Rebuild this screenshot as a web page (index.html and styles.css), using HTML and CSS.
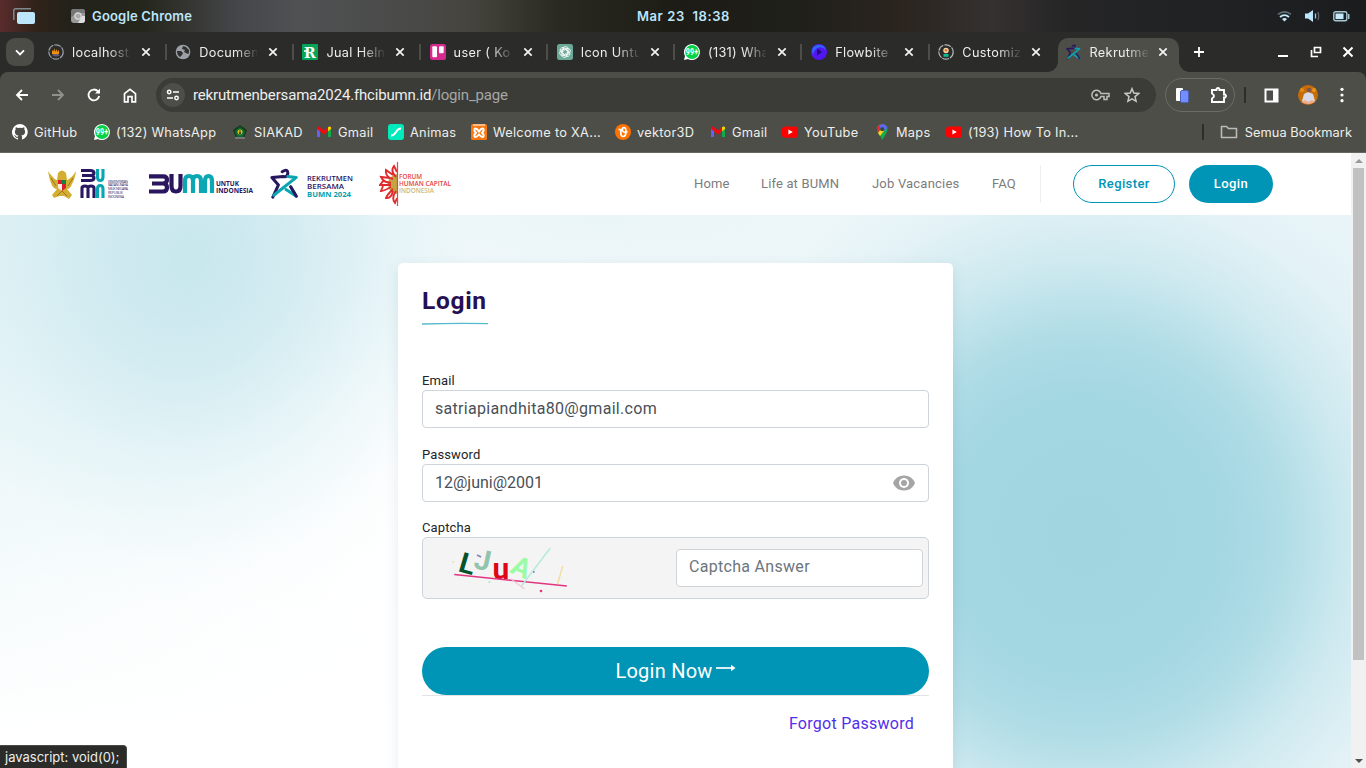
FILE: index.html
```html
<!DOCTYPE html>
<html lang="id">
<head>
<meta charset="utf-8">
<title>Rekrutmen Bersama</title>
<link rel="stylesheet" href="styles.css">
</head>
<body>
<svg width="0" height="0" class="defs">
  <symbol id="x" viewBox="0 0 10 10"><path d="M1.3 1.3l7.4 7.4M8.7 1.3L1.3 8.7" stroke="#f4f4f2" stroke-width="1.7" fill="none"/></symbol>
  <symbol id="gmail" viewBox="0 0 16 16"><path d="M1 4v9h3V6z" fill="#6561f5"/><path d="M12 6v7h3V4z" fill="#12ab4b"/><path d="M1 3.2Q2 1.7 4 3.3L8 6.5l4-3.2v4L8 10.5 4 7.3 1 5z" fill="#f00b12"/><path d="M12 3.3q2-1.7 3 0V5l-3 2.3z" fill="#ffd000"/></symbol>
  <symbol id="yt" viewBox="0 0 16 16"><rect y="2.5" width="16" height="11.2" rx="3" fill="#f00"/><path d="M6.4 5.6v5l4.4-2.5z" fill="#fff"/></symbol>
  <symbol id="star" viewBox="0 0 33 31"><path d="M13 3q6-4 6 2-1 4-5 3L2 9l7 8-6 13" fill="none" stroke="#28165f" stroke-width="3.2" stroke-linecap="round" stroke-linejoin="round"/><path d="M4 28l24-19-9-1M22 19l6 10-11-7" fill="none" stroke="#0aa5b0" stroke-width="3.2" stroke-linecap="round" stroke-linejoin="round"/><path d="M22 19l6 10" stroke="#28165f" stroke-width="3.2" stroke-linecap="round"/></symbol>
</svg>
<header class="system">
  <svg class="spaces" width="22" height="17" viewBox="0 0 22 17"><path d="M.8 12V2.6Q.8.8 2.5.8H18" fill="none" stroke="#7e898d" stroke-width="1.5"/><rect x="4" y="4" width="18" height="12" rx="2" fill="#bde6fb"/></svg>
  <svg class="appicon" width="14" height="14" viewBox="0 0 14 14"><rect width="14" height="14" rx="3" fill="#999"/><path d="M0 8V3q0-3 3-3h8q3 0 3 3v1H7z" fill="#777"/><path d="M7 14l4-7h3v4q0 3-3 3z" fill="#ddd"/><circle cx="7" cy="7" r="3.2" fill="#aaa" stroke="#ddd" stroke-width="1.2"/></svg>
  <b class="appname">Google Chrome</b>
  <b class="clock">Mar 23&nbsp; 18:38</b>
  <div class="tray">
    <svg width="15" height="12" viewBox="0 0 15 12"><path d="M1 4.3Q7.500-.7 14 4.300" fill="none" stroke="#627077" stroke-width="1.700"/><path d="M3 7Q7.500 3.300 12 7" fill="none" stroke="#c5eafa" stroke-width="1.800"/><path d="M5 9q2.500-1.800 5 0L7.500 11.500z" fill="#c5eafa"/></svg>
    <svg width="15" height="12" viewBox="0 0 15 12"><path d="M0 3.500h3L8 0v12L3 8.500H0z" fill="#bde6fb"/><path d="M10.500 3.500v5" stroke="#a8cad8" stroke-width="1.300"/><path d="M13 2q1.300 4 0 8" stroke="#566369" fill="none" stroke-width="1.400"/></svg>
    <svg width="17" height="11" viewBox="0 0 17 11"><rect x=".8" y=".8" width="13" height="9" rx="1.800" fill="none" stroke="#a5c7d6" stroke-width="1.400"/><rect x="2.500" y="2.500" width="8" height="5.600" fill="#c5eafa"/><path d="M15.700 3v5" stroke="#a5c7d6" stroke-width="1.500"/></svg>
  </div>
</header>

<div class="tabs">
  <div class="tabsearch"><svg width="10" height="7" viewBox="0 0 10 7"><path d="M1 1.300l4 4 4-4" fill="none" stroke="#fff" stroke-width="1.900"/></svg></div>
  <div class="tab"><svg class="ic" viewBox="0 0 16 16"><circle cx="8" cy="8" r="7.200" fill="none" stroke="#9aa0a6" stroke-width="1.200" stroke-dasharray="7 1"/><path d="M4 10V7l1.500-1v2l1.500-4v4l2-3v3l2-2v4l-3 1z" fill="#ef9210"/><path d="M4 11q4-2 8 0-4 3-8 0" fill="#665b7d"/></svg><span>localhost</span><svg class="cl"><use href="#x"/></svg></div>
  <div class="tab"><svg class="ic" viewBox="0 0 16 16"><circle cx="8" cy="8" r="7.300" fill="#9aa0a6"/><path d="M2 7h4l2 2-1 2-2 2Q2 11 2 7zM8 2l-1 3 3 1-1 2 4 2-2 2 3-3V6l-3-3z" fill="#30302e"/></svg><span>Documen</span><svg class="cl"><use href="#x"/></svg></div>
  <div class="tab"><svg class="ic" viewBox="0 0 16 16"><rect width="16" height="16" rx="1" fill="#04a557"/><text x="8" y="13.500" text-anchor="middle" font-family="DejaVu Serif" font-size="14" font-weight="700" fill="#fff">R</text><path d="M2 7h4" stroke="#fff" stroke-width="1.500"/></svg><span>Jual Heln</span><svg class="cl"><use href="#x"/></svg></div>
  <div class="tab"><svg class="ic" viewBox="0 0 16 16"><rect width="16" height="16" rx="2.500" fill="#d62a8c"/><rect x="2.300" y="2.300" width="4.700" height="11" rx="1" fill="#fff"/><rect x="9" y="2.300" width="4.700" height="7" rx="1" fill="#fff"/></svg><span>user ( Ko</span><svg class="cl"><use href="#x"/></svg></div>
  <div class="tab"><svg class="ic" viewBox="0 0 16 16"><rect width="16" height="16" rx="2.500" fill="#6aaa97"/><g fill="none" stroke="#fff" stroke-width=".8"><path id="petal" d="M6 8V5q0-2.500 2.500-2.500 2 0 2.500 2M6 6l3-1.700 3 1.700"/><use href="#petal" transform="rotate(60 8 8)"/><use href="#petal" transform="rotate(120 8 8)"/><use href="#petal" transform="rotate(180 8 8)"/><use href="#petal" transform="rotate(240 8 8)"/><use href="#petal" transform="rotate(300 8 8)"/></g></svg><span>Icon Untu</span><svg class="cl"><use href="#x"/></svg></div>
  <div class="tab"><svg class="ic" viewBox="0 0 16 16"><path d="M0 16l1-4A8 8 0 1 1 4 15z" fill="#fff"/><circle cx="8" cy="8" r="6.9" fill="#04d44a"/><text x="8" y="11.300" font-family="Roboto" font-size="9" font-weight="700" text-anchor="middle" fill="#fff" textLength="12.500" lengthAdjust="spacingAndGlyphs">99+</text></svg><span>(131) Wha</span><svg class="cl"><use href="#x"/></svg></div>
  <div class="tab"><svg class="ic" viewBox="0 0 16 16"><circle cx="8" cy="8" r="8" fill="#5216f0"/><path d="M2 11Q-1 3 6 1q7-1 9 5-5-5-10-1-3 3-3 6" fill="#2d66f6"/><path d="M6 4.500v7L11 8z" fill="#240b76"/></svg><span>Flowbite</span><svg class="cl"><use href="#x"/></svg></div>
  <div class="tab last"><svg class="ic" viewBox="0 0 16 16"><circle cx="8" cy="8" r="7.200" fill="none" stroke="#b4b7ba" stroke-width="1.200" stroke-dasharray="7 1"/><circle cx="8" cy="6.500" r="2.700" fill="#f8d8ab"/><circle cx="8" cy="6.300" r="1.400" fill="#e57c25"/><rect x="5.500" y="10" width="5" height="2.800" fill="#0dbd91"/></svg><span>Customiz</span><svg class="cl"><use href="#x"/></svg></div>
  <div class="tab active"><svg class="ic"><use href="#star"/></svg><span>Rekrutme</span><svg class="cl"><use href="#x"/></svg></div>
  <svg class="plus" width="12" height="12" viewBox="0 0 12 12"><path d="M6 1v10M1 6h10" stroke="#fff" stroke-width="1.800"/></svg>
  <div class="winbtns">
    <svg width="12" height="12" viewBox="0 0 12 12"><path d="M1 10h10" stroke="#fff" stroke-width="2"/></svg>
    <svg width="12" height="12" viewBox="0 0 12 12"><path d="M4.500 1.500h6v5h-6zM1.500 4v6.500H8" fill="none" stroke="#fff" stroke-width="1.700"/></svg>
    <svg width="12" height="12" viewBox="0 0 12 12"><path d="M1.500 1.500l9 9M10.500 1.500l-9 9" stroke="#fff" stroke-width="2"/></svg>
  </div>
</div>

<div class="chrome">
  <div class="toolbar">
    <svg width="14" height="12" viewBox="0 0 14 12"><path d="M13 6H2M7 1L2 6l5 5" fill="none" stroke="#fff" stroke-width="1.800"/></svg>
    <svg width="14" height="12" viewBox="0 0 14 12"><path d="M1 6h11M7 1l5 5-5 5" fill="none" stroke="#92928d" stroke-width="1.800"/></svg>
    <svg width="14" height="14" viewBox="0 0 14 14"><path d="M12.200 8A5.400 5.400 0 1 1 11 3.400L12.500 5" fill="none" stroke="#fff" stroke-width="1.800"/><path d="M13 .5v5H8z" fill="#fff"/></svg>
    <svg width="14" height="15" viewBox="0 0 14 15"><path d="M1.500 13.800V5.600L7 1.300l5.500 4.300v8.200H9V8.700H5v5.100z" fill="none" stroke="#fff" stroke-width="1.700"/></svg>
    <div class="omni">
      <i class="site"><svg width="14" height="12" viewBox="0 0 14 12"><g fill="none" stroke="#fff" stroke-width="1.500"><circle cx="3.200" cy="3" r="1.700"/><path d="M7 3h6M1 9h6"/><circle cx="10.500" cy="9" r="1.700"/></g></svg></i>
      <span class="url">rekrutmenbersama2024.fhcibumn.id<em>/login_page</em></span>
      <svg width="19" height="12" viewBox="0 0 19 12"><path d="M10 4.500A4.700 4.700 0 1 0 10 7.500h3v3h3v-3h2v-3z" fill="none" stroke="#bdbdb9" stroke-width="1.500"/><circle cx="5.500" cy="6" r="1.600" fill="#bdbdb9"/></svg>
      <svg width="16" height="16" viewBox="0 0 16 16"><path d="M8 1.700l1.800 4.400 4.900.4L11 9.600l1.100 4.700L8 11.800l-4.100 2.500L5 9.600 1.300 6.500l4.900-.4z" fill="none" stroke="#c7c7c3" stroke-width="1.500"/></svg>
    </div>
    <div class="ext">
      <svg width="14" height="16" viewBox="0 0 14 16"><rect x="1" y="1" width="7" height="13" rx="1" fill="#fff"/><rect x="5.500" y="3.500" width="8" height="12" rx="1.500" fill="#758eff" stroke="#4a61bd"/></svg>
      <svg width="18" height="18" viewBox="0 0 18 18"><path d="M2 4h4.500V3q1.500-2 3 0v1H14v4.500h1q2 1.500 0 3h-1V16H2v-3.500q4-2.500 0-5z" fill="none" stroke="#fff" stroke-width="1.900"/></svg>
    </div>
    <i class="vbar"></i>
    <svg class="side" width="15" height="15" viewBox="0 0 15 15"><rect x="1.500" y="1.500" width="12" height="12" fill="none" stroke="#fff" stroke-width="2"/><path d="M9 1h5v13H9z" fill="#fff"/></svg>
    <svg class="me" width="20" height="20" viewBox="0 0 20 20"><circle cx="10" cy="10" r="10" fill="#c66d08"/><circle cx="4" cy="5" r="2" fill="#e78b17"/><circle cx="16" cy="5" r="2" fill="#e9951a"/><path d="M4 16l2-7 4-2 5 2 2 7-6 3z" fill="#d6dae8"/><circle cx="11" cy="5" r="2.300" fill="#815447"/><path d="M3 17l4-2 3 2 4-2 3 2q-7 4-14 0" fill="#f3a986"/></svg>
    <svg width="4" height="16" viewBox="0 0 4 16"><g fill="#fff"><circle cx="2" cy="2.300" r="1.600"/><circle cx="2" cy="8" r="1.600"/><circle cx="2" cy="13.700" r="1.600"/></g></svg>
  </div>
  <div class="bookmarks">
    <a class="w1"><svg class="ic" viewBox="0 0 16 16"><path d="M8 0a8 8 0 0 0-2.500 15.600c.4.100.5-.2.500-.4v-1.400c-2.200.5-2.700-1-2.700-1-.4-.9-.9-1.200-.9-1.200-.7-.5.100-.5.100-.5.800.1 1.200.8 1.200.8.700 1.300 1.900.9 2.300.7.100-.5.300-.9.500-1.100-1.800-.2-3.600-.9-3.600-4 0-.9.300-1.600.8-2.100-.1-.2-.4-1 .1-2.100 0 0 .7-.2 2.200.8a7.500 7.500 0 0 1 4 0c1.500-1 2.200-.8 2.200-.8.400 1.100.2 1.900.1 2.100.5.600.8 1.300.8 2.100 0 3.100-1.900 3.700-3.700 3.900.3.300.6.800.6 1.500v2.200c0 .2.100.5.500.4A8 8 0 0 0 8 0" fill="#fff"/></svg>GitHub</a>
    <a class="w2"><svg class="ic" viewBox="0 0 16 16"><path d="M0 16l1-4A8 8 0 1 1 4 15z" fill="#fff"/><circle cx="8" cy="8" r="6.9" fill="#04d44a"/><text x="8" y="11.300" font-family="Roboto" font-size="9" font-weight="700" text-anchor="middle" fill="#fff" textLength="12.500" lengthAdjust="spacingAndGlyphs">99+</text></svg>(132) WhatsApp</a>
    <a class="w3"><svg class="ic" viewBox="0 0 16 16"><path d="M8 1l7 5-3 8H4L1 6z" fill="#173c1d"/><path d="M8 3l5 4-2 6H5L3 7z" fill="#0e6c32"/><circle cx="8" cy="8" r="2.500" fill="#e1bb16"/><path d="M8 5l1 5H7z" fill="#193a1f"/><path d="M3 13h10v2H3z" fill="#777"/></svg>SIAKAD</a>
    <a class="w4"><svg class="ic"><use href="#gmail"/></svg>Gmail</a>
    <a class="w5"><svg class="ic" viewBox="0 0 16 16"><rect width="16" height="16" rx="3" fill="#00eabc"/><path d="M3 11.500q3 0 5-3.500t5-3.500" fill="none" stroke="#fff" stroke-width="2"/></svg>Animas</a>
    <a class="w6"><svg class="ic" viewBox="0 0 16 16"><rect width="16" height="16" rx="1.500" fill="#f77810"/><path d="M2 1h12" stroke="#fff"/><path d="M8 7.500Q6 4.500 4.500 4.500T3.500 7L5 8.700l-1.500 1.800q-.5 2.500 1 2.500T8 10.500q2 2.500 3.500 2.500t1-2.500L11 8.700 12.500 7q.5-2.500-1-2.500T8 7.500z" fill="none" stroke="#fff" stroke-width="2"/></svg>Welcome to XA...</a>
    <a class="w7"><svg class="ic" viewBox="0 0 16 16"><circle cx="8" cy="8" r="8" fill="#ff7200"/><path d="M3.500 5.500H6q-1 7 2 7t3-5q0-4-2-4T7.500 6.500q1 3 5 1" fill="none" stroke="#fff" stroke-width="1.700"/></svg>vektor3D</a>
    <a class="w8"><svg class="ic"><use href="#gmail"/></svg>Gmail</a>
    <a class="w9"><svg class="ic"><use href="#yt"/></svg>YouTube</a>
    <a class="w10"><svg class="ic" viewBox="0 0 16 16"><path d="M3 5q0-4.500 5-5 5.500.5 5.500 5.500 0 3-5.500 10.500-1-4-4-7z" fill="#13ac4e"/><path d="M3 5q0-4 5-5L4 9q-1-2-1-4" fill="#e9252e"/><path d="M8 0q4 0 5.300 4L9 8 5 2z" fill="#5d66f5"/><path d="M4 9l4-5 2 3-4 5z" fill="#ffd117"/><circle cx="8.200" cy="5.300" r="2" fill="#41423b"/></svg>Maps</a>
    <a class="w11"><svg class="ic"><use href="#yt"/></svg>(193) How To In...</a>
    <i class="vbar bm"></i>
    <a class="all"><svg width="18" height="14" viewBox="0 0 18 14"><path d="M1.500 1.500h5l2 2h8v9h-15z" fill="none" stroke="#bbbbb7" stroke-width="1.600" stroke-linejoin="round"/></svg>Semua Bookmark</a>
  </div>
</div>

<div class="viewport">
  <div class="page">
    <nav class="nav">
      <svg class="l1" width="81" height="32" viewBox="0 0 81 32">
        <path d="M0 3q1 2 4 5 3 4 5 4l1-7q4-5 8 0l1 7q4-1 9-9-1 8-4 13-2 5-5 5l5 6-3 4-5-3H11l-5 2-2-3 5-6q-4 0-6-6Q1 10 0 3z" fill="#d3ae30"/><path d="M3 10l5 8M25 10l-5 8M9 28l5-5 5 5" stroke="#9b7722" fill="none"/><path d="M10 12h4v4h-4zm4 4h4v4l-4 3z" fill="#d81f32"/><path d="M14 12h4v4h-4z" fill="#19833b"/><path d="M10 16h4v7l-4-3z" fill="#f3efe0"/>
        <g fill="none" stroke-width="3.100"><path d="M33 2.500h9q4 0 4 2.500t-4 2.500h-8 8q4 0 4 2.500t-4 2.500h-9M34 30V20q0-2 3-2t3 2v10-10q0-2 3-2t3 2v10" stroke="#281761"/><path d="M49.500 1v8q0 3.500 2.700 3.500T55 9V1M49.500 30V21q0-3.500 2.700-3.500T55 21v9" stroke="#08a6b1"/></g>
        <g class="wide" font-size="3.600" fill="#39306b"><text x="60" y="14.500" textLength="20">KEMENTERIAN</text><text x="60" y="18.300" textLength="20">BADAN USAHA</text><text x="60" y="22.100" textLength="20">MILIK NEGARA</text><text x="60" y="25.900" textLength="15">REPUBLIK</text><text x="60" y="29.700" textLength="16">INDONESIA</text></g>
      </svg>
      <svg class="l2" width="106" height="22" viewBox="0 0 106 22">
        <g fill="none" stroke-width="4.200"><path d="M1 3.300h14q4 0 4 3.400T15 10.500H4h11q4 0 4 4T15 18.500H1M23.500 1v12q0 5.500 4.500 5.500t4.500-5.500V1" stroke="#29165f"/><path d="M37 20V8q0-5 4-5t4 5v12V8q0-5 4-5t4 5v12M57 20V8q0-5 3.500-5T64 8v12" stroke="#0ba8b3"/></g>
        <g class="wide" font-size="6.800" font-weight="700" fill="#29165f"><text x="68" y="12.500" textLength="23" lengthAdjust="spacingAndGlyphs">UNTUK</text><text x="68" y="19.500" textLength="37" lengthAdjust="spacingAndGlyphs">INDONESIA</text></g>
      </svg>
      <svg class="l3" width="84" height="33" viewBox="0 0 84 33"><svg width="31" height="31"><use href="#star"/></svg><g class="wide" font-size="7.300" font-weight="600" fill="#29165f"><text x="37" y="13.300" textLength="46" lengthAdjust="spacingAndGlyphs">REKRUTMEN</text><text x="37" y="20.900" textLength="37" lengthAdjust="spacingAndGlyphs">BERSAMA</text><text x="37" y="28.500" textLength="44" lengthAdjust="spacingAndGlyphs" font-weight="700" fill="#06a2af">BUMN 2024</text></g></svg>
      <svg class="l4" width="74" height="46" viewBox="0 0 74 46"><path d="M18 13q-9 2-9 10t9 10z" fill="#c4a343"/><g fill="none" stroke="#e02b2c" stroke-width="1.900"><path d="M17 16q-6-6-2-11l3 6M14 18Q6 16 7 9l7 5M12 22Q5 22 2 16l9 1M12 24Q5 24 1 24l3-4 8 2M12 26q-7 4-10 4l2-5M14 28q-6 6-7 9 5 1 7-7M17 30q-5 7-1 12l2-5"/></g><path d="M18.500 1v44" stroke="#df4a43" stroke-width="1.200"/><g class="wide" font-size="6.500" font-weight="600" fill="#e44344"><text x="20" y="18" textLength="23" lengthAdjust="spacingAndGlyphs">FORUM</text><text x="20" y="25" textLength="52" lengthAdjust="spacingAndGlyphs">HUMAN CAPITAL</text><text x="20" y="32.200" textLength="35" lengthAdjust="spacingAndGlyphs" fill="#cbb87a">INDONESIA</text></g></svg>
      <div class="links"><a class="n1">Home</a><a class="n2">Life at BUMN</a><a class="n3">Job Vacancies</a><a class="n4">FAQ</a></div>
      <a class="btn outline">Register</a><a class="btn solid">Login</a>
    </nav>
    <main class="hero">
      <form class="card">
        <h1>Login</h1>
        <svg class="stroke" width="66" height="3" viewBox="0 0 66 3"><path d="M0 2Q32 1 66 1.600" stroke="#55b8cd" stroke-width="1.400" fill="none"/></svg>
        <label class="em">Email</label>
        <div class="field email">satriapiandhita80@gmail.com</div>
        <label>Password</label>
        <div class="field pass"><span>12@juni@2001</span><svg width="22" height="16" viewBox="0 0 22 16"><path d="M0 8Q3 .5 11 .5T22 8q-3 7.500-11 7.500T0 8z" fill="#a5a5a5"/><circle cx="11" cy="8" r="5" fill="#fff"/><circle cx="11" cy="8" r="3" fill="#a5a5a5"/></svg></div>
        <label class="cap">Captcha</label>
        <div class="captcha">
          <svg width="126" height="50" viewBox="0 0 122 50" preserveAspectRatio="none"><g font-family="Roboto" font-weight="700"><text transform="translate(11 28) rotate(16)" font-size="28" fill="#06522c">L</text><text transform="translate(26 25) rotate(12)" font-size="28" fill="#92c3ad">J</text><text x="45" y="36" font-size="29" fill="#de0715">u</text><text transform="translate(61 29) rotate(24)" font-size="27" fill="#9bfca5">A</text></g><path d="M8 31.500l109 11.500" stroke="#df367f" stroke-width="1.600"/><path d="M73 43L101 5" stroke="#b6ebdc" stroke-width="1.400"/><path d="M108 41l5-18" stroke="#f1dfa0" stroke-width="1.400"/><path d="M63 36l13 10" stroke="#f1c4d4"/><path d="M30 12l4 2" stroke="#8980be" stroke-width="1.500"/><circle cx="7" cy="19" r="1" fill="#efe398"/><circle cx="92" cy="48" r="1.300" fill="#df367f"/><circle cx="42" cy="39" r="1" fill="#a2e9c5"/><circle cx="85" cy="29" r="1" fill="#8787bd"/></svg>
          <div class="field answer">Captcha Answer</div>
        </div>
        <button type="button" class="submit"><span>Login Now</span><svg width="20" height="10" viewBox="0 0 20 10"><path d="M0 5h17" stroke="#fff" stroke-width="1.700"/><path d="M15 1.800v6.400L19.500 5z" fill="#fff"/></svg></button>
        <hr>
        <a class="forgot">Forgot Password</a>
      </form>
    </main>
  </div>
  <aside class="scroll"><i class="up"></i><i class="thumb"></i><i class="down"></i></aside>
</div>
<div class="status">javascript: void(0);</div>
</body>
</html>
```
FILE: styles.css
```css
* { box-sizing: border-box; }
body { margin: 0; width: 1366px; height: 768px; overflow: hidden; display: flex; flex-direction: column; font-family: Inter, sans-serif; color: #eeeeec; background: #2b2c29; }
svg { flex: none; display: block; }
.defs { position: absolute; }
.ic { width: 16px; height: 16px; }
.system { height: 32px; flex: none; display: flex; align-items: center; padding: 0 16px 1px 0; color: #bde6fb; font-size: 13px; background: linear-gradient(90deg, #592c2c 0, #30231a 35px, #22221a 70px, #24251b 140px, #46474a 240px, #505153 300px, #4a4a49 400px, #45443e 470px, #2a2920 560px, #1c1b15 680px, #20201b 800px, #2b241f 900px, #353130 990px, #252526 1070px, #212224 1200px, #1b1c1e 1366px); }
.spaces { margin: 1px 0 0 13px; }
.appicon { margin: 1px 0 0 36px; }
.appname { margin-left: 7px; width: 100px; font-weight: 600; letter-spacing: .17px; white-space: nowrap; }
.clock { margin-left: 445px; font-weight: 600; letter-spacing: .58px; white-space: nowrap; }
.tray { margin: 1px 0 0 auto; display: flex; align-items: center; gap: 13px; }
.tabs { height: 40px; flex: none; display: flex; align-items: center; padding: 6px 12px 0 6px; background: #2b2c29; }
.tabsearch { width: 28px; height: 28px; margin: -6px 6px 0 0; border-radius: 9px; background: #4b4c46; display: grid; place-items: center; }
.tab { width: 127.200px; height: 34px; flex: none; padding: 0 0 6px 8px; display: flex; align-items: center; gap: 8px; font-size: 12.700px; letter-spacing: .35px; background: linear-gradient(#4d4d49, #4d4d49) 124.500px 6px / 2px 16px no-repeat; }
.tab span { width: 58px; white-space: nowrap; mask-image: linear-gradient(90deg, #000 36px, transparent 60px); }
.cl { width: 10px; height: 10px; margin-left: 3px; }
.tab.last { background: none; }
.tab.active { width: 121px; background: #4d4e48; border-radius: 10px 10px 0 0; position: relative; }
.tab.active .cl { margin-left: 2px; }
.tab.active::before, .tab.active::after { content: ""; position: absolute; bottom: 0; width: 10px; height: 10px; }
.tab.active::before { left: -10px; background: radial-gradient(circle at 0 0, transparent 9.500px, #4d4e48 10px); }
.tab.active::after { right: -10px; background: radial-gradient(circle at 100% 0, transparent 9.500px, #4d4e48 10px); }
.plus { margin: -6px 0 0 14px; }
.winbtns { display: flex; gap: 20.500px; margin: -6px 0 0 auto; }
.chrome { height: 81px; flex: none; background: #4d4e48; border-radius: 8px 8px 0 0; border-bottom: 1px solid #656660; }
.toolbar { height: 46px; display: flex; align-items: center; padding: 0 20px 0 15px; gap: 22px; }
.omni { width: 1000px; height: 34px; margin-left: -3px; border-radius: 17px; background: #3b3b38; display: flex; align-items: center; padding: 0 16px 0 5px; gap: 14px; }
.site { width: 24px; height: 24px; border-radius: 50%; background: #4d4e48; display: grid; place-items: center; }
.url { margin-left: -6px; font: 15px Roboto, sans-serif; flex: 1; letter-spacing: -.17px; }
.url em { font-style: normal; color: #a7a7a3; }
.ext { margin-left: -13px; width: 70px; height: 34px; border: 1px solid #6b6c66; border-radius: 17px; display: flex; align-items: center; justify-content: space-between; padding: 0 6px 0 9px; }
.vbar { width: 2px; height: 16px; background: #2d2e2a; margin-left: -13px; flex: none; }
.side { margin-left: -4px; }
.me { margin-left: -3px; }
.bookmarks { height: 28px; display: flex; align-items: center; padding: 0 14px 0 12px; font-size: 12.800px; letter-spacing: .27px; white-space: nowrap; }
.bookmarks a { display: flex; align-items: center; gap: 6px; flex: none; }
.w1 { width: 82px; } .w2 { width: 138px; } .w3 { width: 84px; } .w4 { width: 72px; } .w5 { width: 83px; } .w6 { width: 144px; } .w7 { width: 95px; } .w8 { width: 72px; } .w9 { width: 92px; } .w10 { width: 72px; } .w11 { width: 140px; }
.vbar.bm { margin-left: auto; }
.bookmarks a.all { margin-left: 16px; gap: 7px; letter-spacing: .06px; }
.viewport { height: 615px; display: flex; background: #fff; }
.page { width: 1351px; font-family: Roboto, sans-serif; }
.nav { height: 62px; display: flex; align-items: center; padding-left: 48px; background: #fff; font-size: 13px; color: #7c7c7c; }
.wide { font-family: "Open Sans", sans-serif; }
.l2 { margin-left: 19px; }
.l3 { margin-left: 16px; }
.l4 { margin-left: 25px; }
.links { margin-left: 241px; width: 347px; height: 38px; display: flex; align-items: center; padding-bottom: 1px; border-right: 1px solid #eee; letter-spacing: .15px; white-space: nowrap; }
.n1 { width: 67px; } .n2 { width: 111px; } .n3 { width: 120px; letter-spacing: .2px; }
.btn { height: 38px; border-radius: 19px; display: grid; place-items: center; font-weight: 500; letter-spacing: .4px; padding-bottom: 2px; }
.outline { width: 102px; margin-left: 32px; border: 1px solid #0095b6; color: #0095b6; }
.solid { width: 84px; margin-left: 14px; background: #0095b6; color: #fff; }
.hero { height: 553px; padding: 48px 0 0 398px; overflow: hidden; background:
  radial-gradient(ellipse 330px 360px at 190px 45px, rgba(195,229,236,.9), rgba(200,231,238,.75) 30%, rgba(215,238,243,.45) 60%, rgba(235,247,249,.15) 85%, transparent),
  radial-gradient(ellipse 410px 420px at 1085px 320px, #a1d6e1 0, #a3d7e2 33%, rgba(173,219,229,.95) 48%, rgba(198,230,237,.78) 65%, rgba(220,239,244,.5) 82%, rgba(235,246,249,.1) 96%, transparent),
  radial-gradient(ellipse 700px 200px at 600px 0, #eaf5f8, transparent),
  linear-gradient(rgba(255,255,255,0), #fff 520px) 0 0 / 400px 100% no-repeat,
  linear-gradient(90deg, #e0f2f5 0, #f8fcfd 260px, #fff 420px, #f0f8fa 850px, #e8f4f8 1350px); }
.card { width: 555px; height: 520px; padding: 24px; background: #fff; border-radius: 5px 5px 0 0; box-shadow: 0 4px 14px rgba(0,80,100,.1); display: flex; flex-direction: column; color: #212529; }
h1 { margin: 0; font-size: 24.500px; line-height: 28px; letter-spacing: .7px; color: #251052; }
.stroke { margin: 7px 0 48px; }
label { font-size: 13px; line-height: 18px; height: 18px; letter-spacing: .12px; margin-top: 18px; }
label.em { margin-top: -1px; }
.field { height: 38px; border: 1px solid #ced4da; border-radius: 4px; background: #fff; font-size: 16px; color: #495057; display: flex; align-items: center; padding: 0 12px 1px; flex: none; }
.email { letter-spacing: .3px; }
.pass { justify-content: space-between; padding-right: 13px; }
label.cap { margin-top: 17px; }
.captcha { height: 62px; flex: none; border: 1px solid #ced4da; border-radius: 5px; background: #f4f4f4; display: flex; align-items: center; justify-content: space-between; padding: 0 5px 0 23px; }
.answer { width: 247px; color: #6c757d; letter-spacing: .3px; padding-bottom: 3px; }
.submit { margin-top: 48px; height: 48px; flex: none; border: 0; border-radius: 24px; background: #0095b6; color: #fff; font: 20px Roboto, sans-serif; display: flex; align-items: center; justify-content: center; gap: 3px; }
.submit span { letter-spacing: .25px; }
.submit svg { margin-top: -6px; }
hr { width: 100%; height: 1px; flex: none; margin: 0; border: 0; background: #e2e5e6; }
.forgot { align-self: flex-end; margin: 18px 15px 0; font-size: 16px; line-height: 20px; letter-spacing: .27px; color: #512fea; }
.scroll { width: 15px; background: #f1f1f1; display: flex; flex-direction: column; align-items: center; }
.up { margin-top: 6px; border: 4px solid transparent; border-top: 0; border-bottom-color: #999; }
.thumb { margin-top: 5px; width: 11px; height: 492px; background: #c1c1c1; }
.down { margin: auto 0 5px; border: 4px solid transparent; border-bottom: 0; border-top-color: #505050; }
.status { position: absolute; left: 0; bottom: 0; width: 127px; height: 23px; padding: 4px 5px; border: 1px solid #4a4b47; border-width: 1px 1px 0 0; border-radius: 0 4px 0 0; background: #2b2c29; font-size: 13px; line-height: 15px; white-space: nowrap; }
```
